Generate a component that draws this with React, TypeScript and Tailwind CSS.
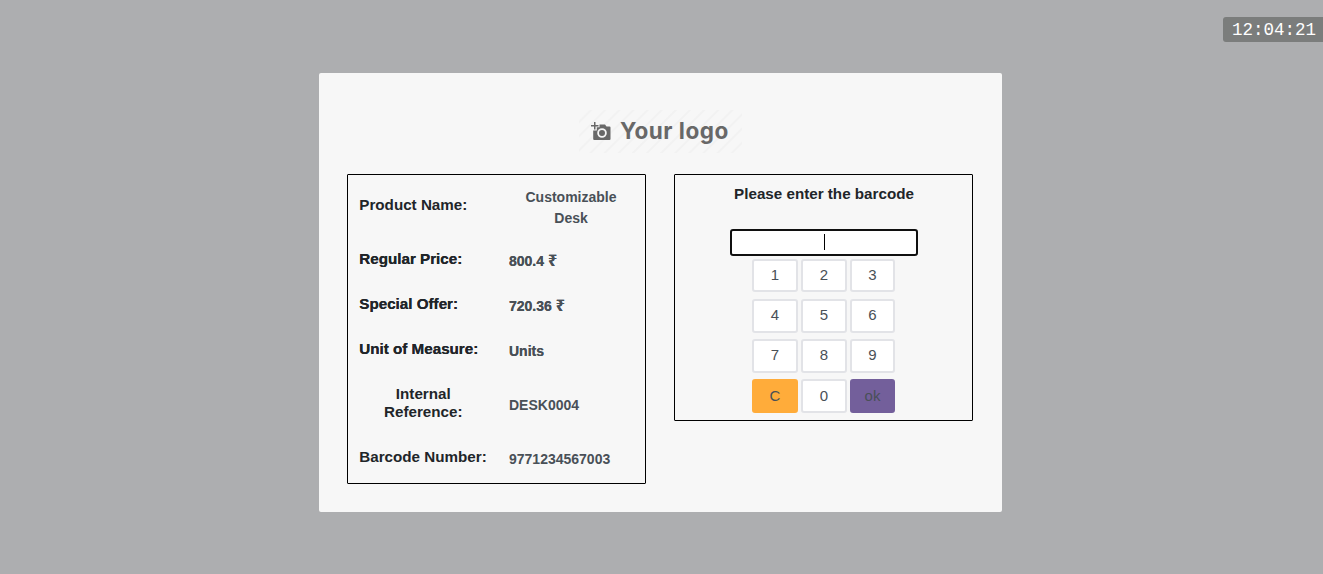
import { useState } from "react";

type Detail = {
  label: string;
  value: string;
  unit?: string;
  height: string;
  labelStyle?: string;
  valueStyle?: string;
};

const details: Detail[] = [
  {
    label: "Product Name:",
    value: "Customizable Desk",
    height: "h-[62px]",
    valueStyle: "w-[124px] text-center leading-[21px] pt-[3px]",
  },
  {
    label: "Regular Price:",
    value: "800.4",
    unit: "₹",
    height: "h-[45px]",
    labelStyle: "[text-shadow:0_0_0_currentColor]",
    valueStyle: "pt-1 [text-shadow:0_0_0_currentColor]",
  },
  {
    label: "Special Offer:",
    value: "720.36",
    unit: "₹",
    height: "h-[45px]",
    labelStyle: "[text-shadow:0_0_0_currentColor]",
    valueStyle: "pt-1 [text-shadow:0_0_0_currentColor]",
  },
  {
    label: "Unit of Measure:",
    value: "Units",
    height: "h-[45px]",
    labelStyle: "[text-shadow:0_0_0_currentColor]",
    valueStyle: "pt-1 [text-shadow:0_0_0_currentColor]",
  },
  {
    label: "Internal Reference:",
    value: "DESK0004",
    height: "h-[63px]",
    labelStyle: "w-[128px] px-4 text-center",
    valueStyle: "pt-1",
  },
  {
    label: "Barcode Number:",
    value: "9771234567003",
    height: "h-[45px]",
    valueStyle: "pt-1",
  },
];

const keys = ["1", "2", "3", "4", "5", "6", "7", "8", "9", "C", "0", "ok"];

function Logo() {
  return (
    <div className="mx-auto flex h-[43px] w-[163px] items-center bg-[repeating-linear-gradient(135deg,#f7f7f7_0px,#f7f7f7_7px,#f2f2f2_8px,#f2f2f2_9px,#f7f7f7_10px)] pl-[11.5px]">
      <svg viewBox="0 0 20 19" className="mb-px h-[19px] w-5 shrink-0" fill="#686868">
        <path d="M3 0h1.5v3H7.5v1.5h-3v3H3v-3H0V3h3z" />
        <path
          fillRule="evenodd"
          d="M8.5 2.4h5.5l1.5 2h3a1 1 0 0 1 1 1V17a1 1 0 0 1-1 1H3.2a1 1 0 0 1-1-1V8.5H5.8V5.3H8.5zM11 6.2a4.8 4.8 0 1 0 0 9.6 4.8 4.8 0 0 0 0-9.6zm0 1.8a3 3 0 1 1 0 6 3 3 0 0 1 0-6z"
        />
      </svg>
      <span className="ml-[9.5px] font-['Inter',sans-serif] text-[22.5px] leading-none font-bold tracking-[0.5px] whitespace-nowrap text-[#686868]">
        Your logo
      </span>
    </div>
  );
}

function ProductDetails() {
  return (
    <section className="h-[310px] w-[299px] rounded-[1px] border border-black">
      {details.map((d) => (
        <div key={d.label} className={`flex items-center pl-[11px] ${d.height}`}>
          <div className="w-[150px] shrink-0 pb-[2px] pl-[0.3px]">
            <div className={`text-[15.2px] leading-[18px] font-bold text-[#212529] ${d.labelStyle ?? ""}`}>
              {d.label}
            </div>
          </div>
          <div className={`text-[14px] leading-[21px] font-bold text-[#495057] ${d.valueStyle ?? ""}`}>
            {d.value}{" "}
            {d.unit && <span className="font-['Noto_Sans',sans-serif] text-base leading-none">{d.unit}</span>}
          </div>
        </div>
      ))}
    </section>
  );
}

function Keypad() {
  const [code, setCode] = useState("");
  const press = (key: string) => {
    if (key === "C") setCode("");
    else if (key !== "ok") setCode(code + key);
  };
  return (
    <section className="flex h-[247px] w-[299px] flex-col items-center rounded-[1px] border border-black">
      <h2 className="mt-[10px] pl-px text-[15.2px] leading-[18px] font-bold text-[#212529]">
        Please enter the barcode
      </h2>
      <div className="mt-[26px] flex h-[27px] w-[188px] items-center justify-center rounded-[3px] border-2 border-[#101010] bg-white pb-px text-[15px]">
        {code}
        <span className="ml-px h-4 w-px bg-black" />
      </div>
      <div className="mt-[3px] mr-px grid grid-cols-[46px_46px_45px] grid-rows-[34px_34px_34px_34px] gap-x-[3px] gap-y-[6px]">
        {keys.map((key, i) => (
          <button
            key={key}
            onClick={() => press(key)}
            className={`rounded-[3px] border-2 pl-px text-[15px] leading-none text-[#495057] ${
              i < 3 ? "h-[33px] pb-[3px]" : i < 9 ? "h-[34px] pb-1" : "h-[34px] pb-px"
            } ${
              key === "C"
                ? "border-[#ffac3a] bg-[#ffac3a]"
                : key === "ok"
                  ? "border-[#735f9b] bg-[#735f9b]"
                  : "border-[#e2e3e7] bg-white"
            }`}
          >
            {key}
          </button>
        ))}
      </div>
    </section>
  );
}

export default function App() {
  return (
    <main className="relative flex h-[574px] justify-center overflow-hidden bg-[#adaeb0] pt-[73px] font-['Liberation_Sans',sans-serif]">
      <div className="mr-[2px] h-[439px] w-[683px] rounded-[2px] bg-[#f7f7f7] pt-[37px]">
        <Logo />
        <div className="mt-[21px] flex items-start gap-7 pl-7">
          <ProductDetails />
          <Keypad />
        </div>
      </div>
      <time className="absolute top-[17px] right-0 h-[25px] w-[100px] rounded-l-[3px] bg-[#7b7d7c] pl-[9px] font-['Liberation_Mono',monospace] text-[17.5px] leading-[26px] text-white">
        12:04:21
      </time>
    </main>
  );
}
